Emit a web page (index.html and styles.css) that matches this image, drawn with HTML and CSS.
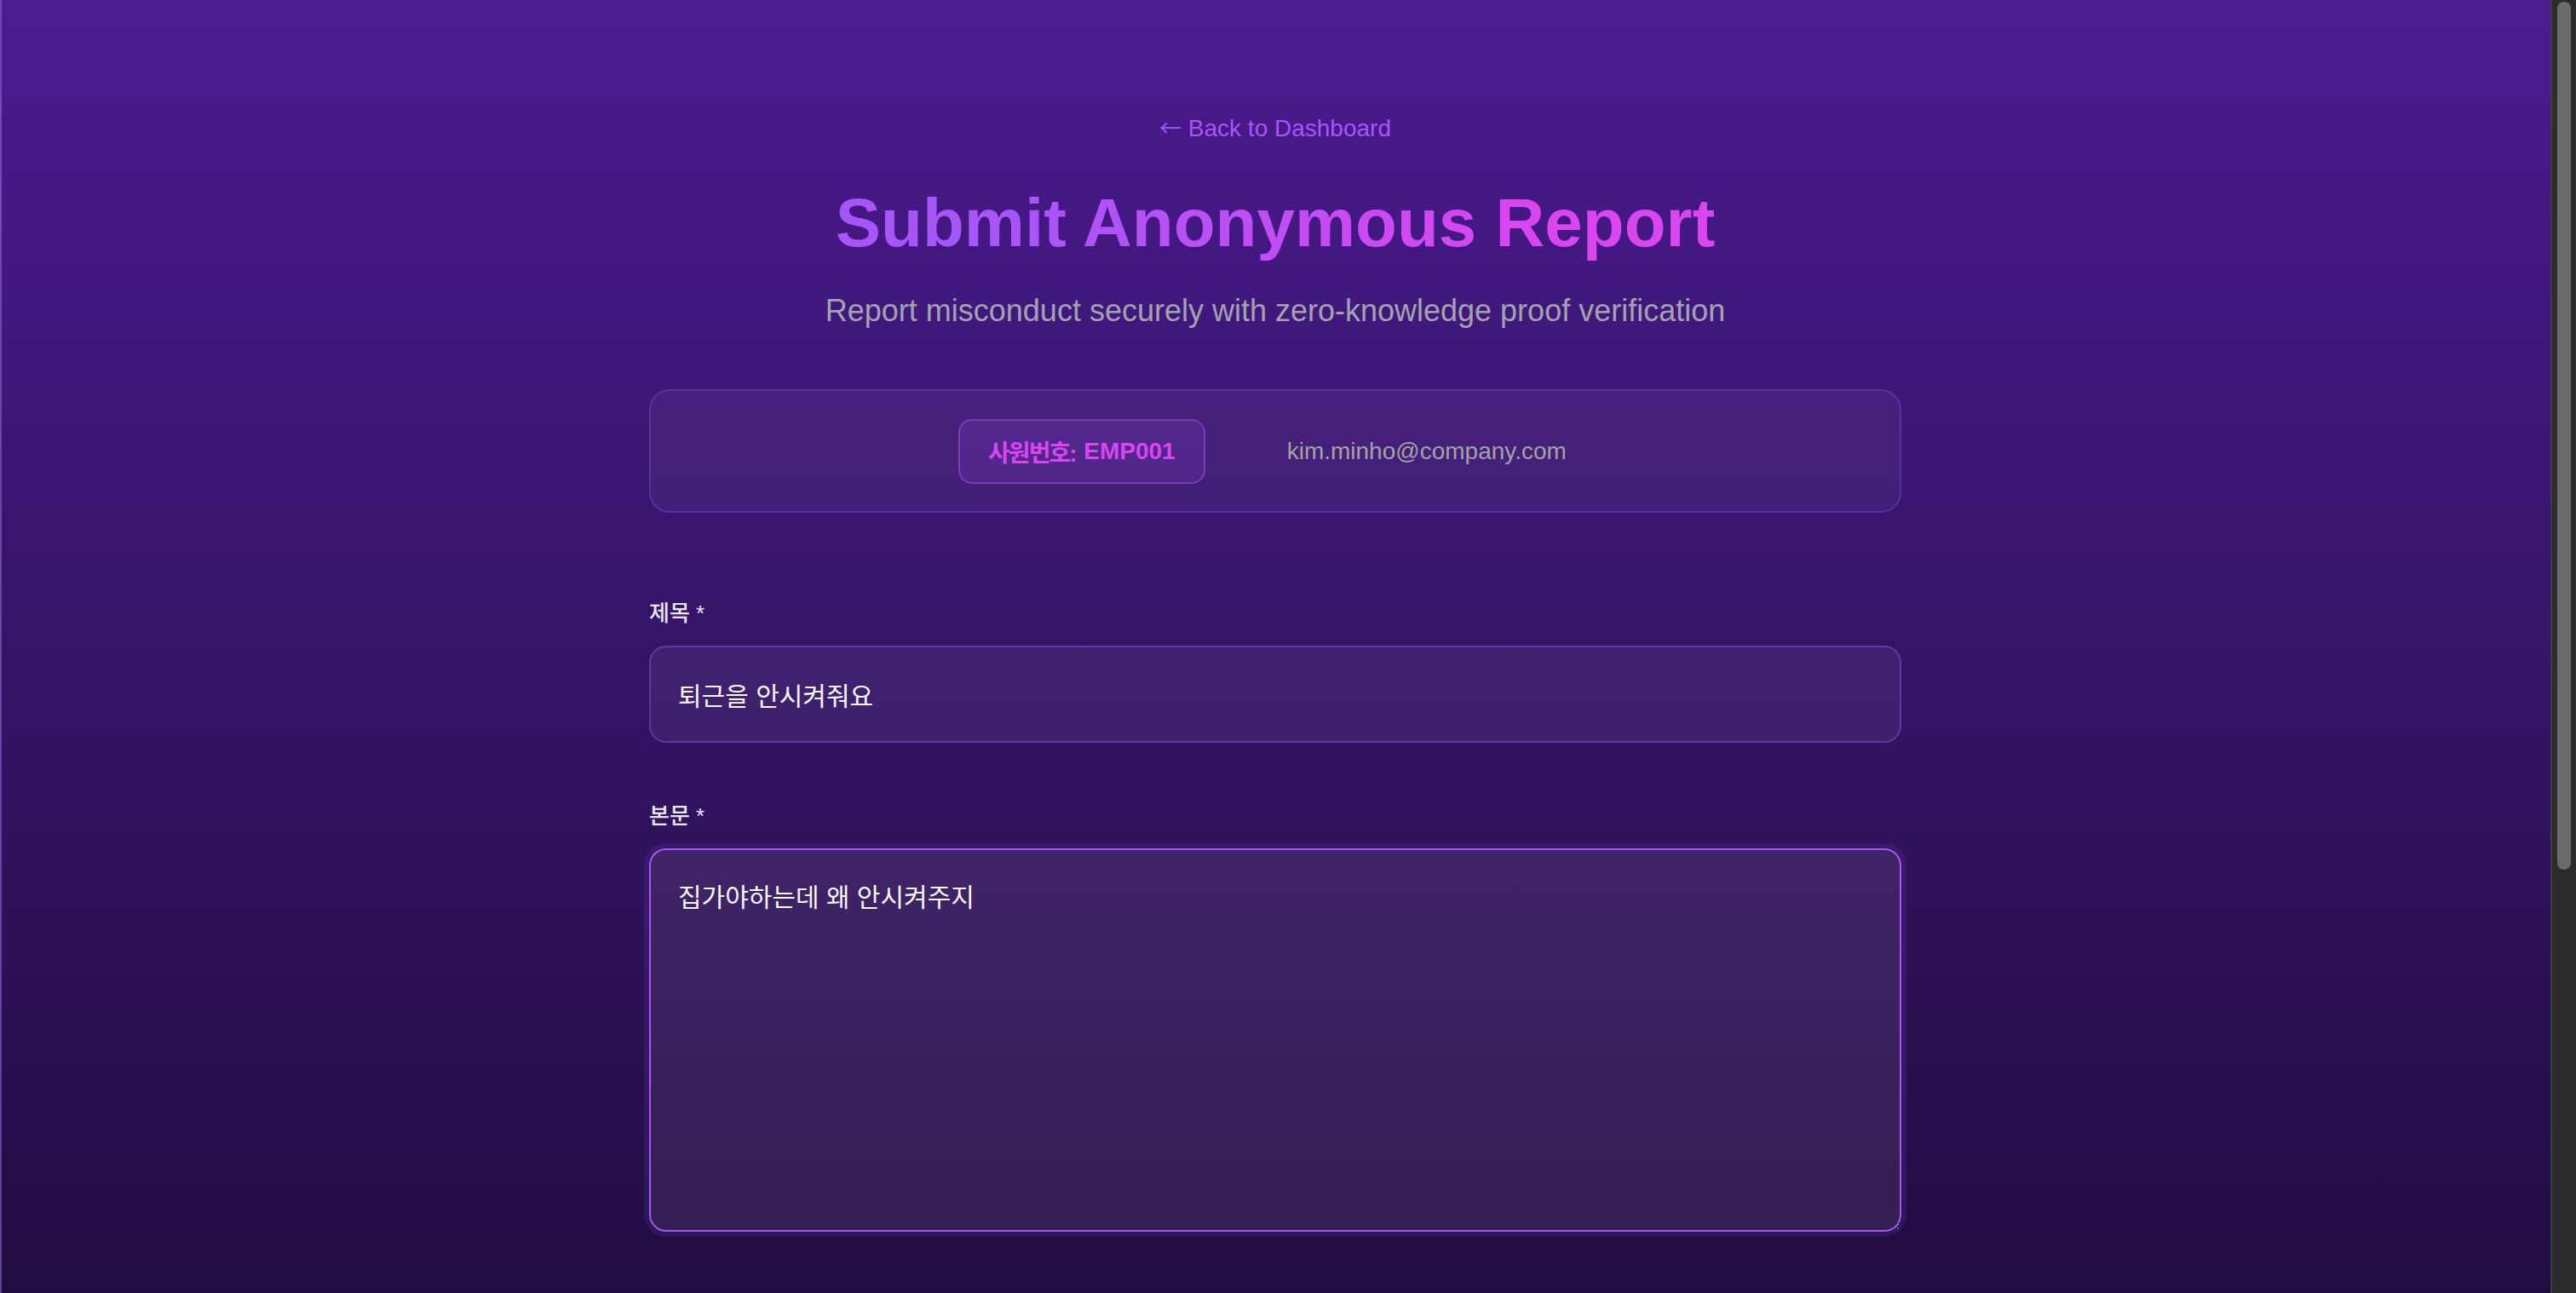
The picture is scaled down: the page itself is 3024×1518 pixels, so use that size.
FILE: index.html
```html
<!DOCTYPE html>
<html lang="ko">
<head>
<meta charset="utf-8">
<title>Submit Anonymous Report</title>
<link rel="stylesheet" href="styles.css">
</head>
<body>
<div class="page">
  <main class="container">
    <nav class="nav"><a class="back" href="#"><span class="arrow">←</span> Back to Dashboard</a></nav>
    <h1 class="title">Submit Anonymous Report</h1>
    <p class="subtitle">Report misconduct securely with zero-knowledge proof verification</p>

    <section class="identity">
      <span class="badge"><span class="ko">사원번호:</span> EMP001</span>
      <span class="email">kim.minho@company.com</span>
    </section>

    <form class="form">
      <div class="field">
        <label class="label" for="title">제목 *</label>
        <input class="input" id="title" type="text" value="퇴근을 안시켜줘요">
      </div>
      <div class="field">
        <label class="label" for="body">본문 *</label>
        <textarea class="textarea" id="body" spellcheck="false">집가야하는데 왜 안시켜주지</textarea>
      </div>
    </form>
  </main>
</div>
<div class="scrollbar" aria-hidden="true"><div class="scrollbar-thumb"></div></div>
</body>
</html>
```

FILE: styles.css
```css
html {
  color-scheme: dark;
  background: #160a2e;
}

body {
  margin: 0;
  font-family: "Liberation Sans", Arial, "Noto Sans CJK KR", sans-serif;
  background: linear-gradient(180deg, #4b1b90 0px, #200d40 1518px, #150929 100%);
  min-height: 100vh;
  box-shadow: inset 2px 0 0 rgba(150, 110, 220, 0.55);
}

.page {
  padding: 132px 30px 40px 0;
}

.container {
  width: 1470px;
  margin: 0 auto;
}

.nav {
  text-align: center;
  height: 34px;
}

.back {
  color: #a855f7;
  font-size: 28px;
  line-height: 34px;
  text-decoration: none;
}

.arrow {
  font-family: "Noto Sans CJK KR", sans-serif;
  font-size: 26px;
}

.title {
  margin: 48px 0 0;
  font-size: 80px;
  line-height: 96px;
  font-weight: 700;
  text-align: center;
  background: linear-gradient(90deg, #a855f7 30%, #d946ef 70%);
  -webkit-background-clip: text;
  background-clip: text;
  color: transparent;
}

.subtitle {
  margin: 34px 0 0;
  font-size: 36px;
  line-height: 42px;
  text-align: center;
  color: #a3a3ad;
}

.identity {
  margin-top: 71px;
  display: flex;
  align-items: center;
  justify-content: center;
  gap: 96px;
  height: 145px;
  box-sizing: border-box;
  border: 2px solid rgba(168, 85, 247, 0.28);
  border-radius: 24px;
  background: rgba(255, 255, 255, 0.045);
}

.badge {
  display: inline-flex;
  align-items: center;
  box-sizing: border-box;
  height: 76px;
  padding: 0 33px;
  border: 2px solid rgba(168, 85, 247, 0.45);
  border-radius: 16px;
  background: rgba(168, 85, 247, 0.14);
  color: #d946ef;
  font-size: 28px;
  font-weight: 700;
  white-space: pre;
}

.badge .ko {
  letter-spacing: -2px;
  margin-right: 2px;
}

.email {
  color: #a3a3a3;
  font-size: 28px;
  margin-right: 30px;
}

.form {
  margin-top: 101px;
  display: flex;
  flex-direction: column;
  gap: 69px;
}

.field {
  display: flex;
  flex-direction: column;
  gap: 20px;
}

.label {
  color: #e8e6ee;
  font-size: 26px;
  line-height: 35px;
  font-weight: 500;
}

.input,
.textarea {
  box-sizing: border-box;
  width: 100%;
  font-family: "Liberation Sans", "Noto Sans CJK KR", sans-serif;
  font-size: 30px;
  color: #f8f7fb;
  background: rgba(255, 255, 255, 0.06);
  border: 2px solid rgba(168, 85, 247, 0.38);
  border-radius: 20px;
  outline: none;
}

.input {
  height: 114px;
  padding: 0 32px;
}

.textarea {
  height: 450px;
  padding: 35px 32px 28px;
  line-height: 42px;
  resize: vertical;
  border-color: #a855f7;
  background: rgba(255, 255, 255, 0.08);
  box-shadow: 0 0 0 6px rgba(168, 85, 247, 0.12);
}

.scrollbar {
  position: fixed;
  top: 0;
  right: 0;
  width: 30px;
  height: 100vh;
  background: #2c2c2c;
  box-shadow: inset 2px 0 0 #3e3e3e;
}

.scrollbar-thumb {
  margin: 2px 6px 0 8px;
  height: 1019px;
  border-radius: 8px;
  background: #6b6b6b;
}
```
